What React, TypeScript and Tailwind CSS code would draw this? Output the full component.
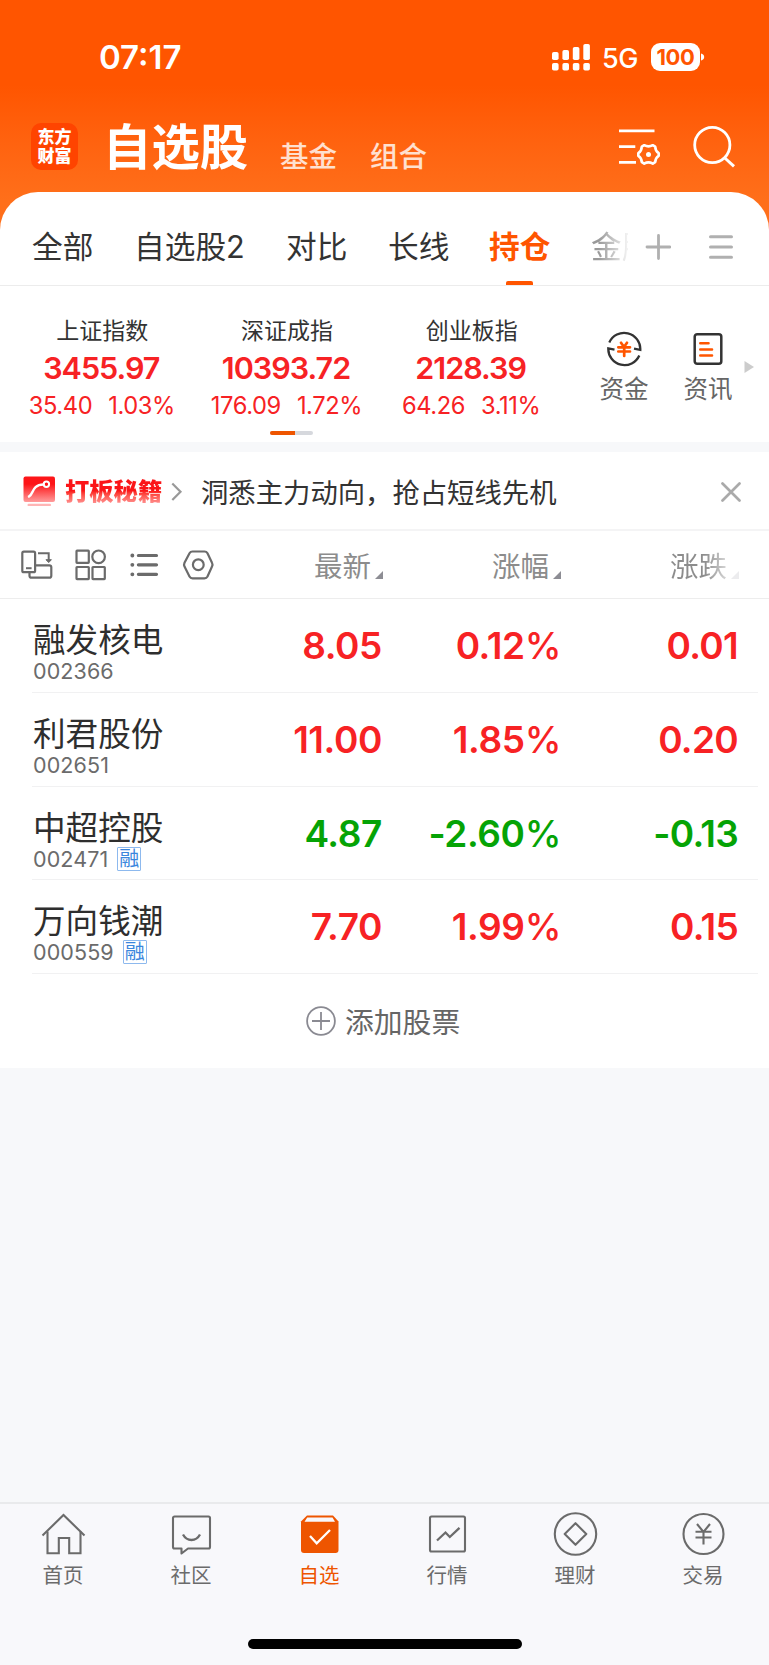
import React from "react";

const indices = [
  { name: "上证指数", value: "3455.97", change: "35.40", pct: "1.03%" },
  { name: "深证成指", value: "10393.72", change: "176.09", pct: "1.72%" },
  { name: "创业板指", value: "2128.39", change: "64.26", pct: "3.11%" },
];

const stocks = [
  { name: "融发核电", code: "002366", tag: false, price: "8.05", pct: "0.12", diff: "0.01", up: true },
  { name: "利君股份", code: "002651", tag: false, price: "11.00", pct: "1.85", diff: "0.20", up: true },
  { name: "中超控股", code: "002471", tag: true, price: "4.87", pct: "-2.60", diff: "-0.13", up: false },
  { name: "万向钱潮", code: "000559", tag: true, price: "7.70", pct: "1.99", diff: "0.15", up: true },
];

function StatusBar() {
  return (
    <div className="flex h-[115px] items-start justify-between pl-[99px] pr-[64px]">
      <span className="mt-[37px] text-[33px] font-semibold leading-[40px] text-white">07:17</span>
      <div className="mt-[43px] flex h-[28px] items-center">
        <svg width="39" height="28" viewBox="0 0 39 28" fill="#fff">
          <rect x="0" y="9" width="6.6" height="8" rx="1.8" />
          <rect x="10.4" y="7" width="6.6" height="10" rx="1.8" />
          <rect x="20.8" y="4" width="6.6" height="13" rx="1.8" />
          <rect x="31.3" y="1" width="6.6" height="16" rx="1.8" />
          <rect x="0" y="20" width="6.6" height="7.5" rx="1.8" />
          <rect x="10.4" y="20" width="6.6" height="7.5" rx="1.8" />
          <rect x="20.8" y="20" width="6.6" height="7.5" rx="1.8" />
          <rect x="31.3" y="20" width="6.6" height="7.5" rx="1.8" />
        </svg>
        <span className="ml-[11px] mt-[3px] w-[38px] text-[27px] font-medium leading-[28px] tracking-[-0.5px] text-white">5G</span>
        <div className="ml-[11px] flex h-[28px] w-[49px] items-center justify-center rounded-[9px] bg-white text-[22px] font-bold leading-[28px] tracking-[-0.4px] text-[#ff5500]">
          100
        </div>
        <svg className="ml-[1px]" width="4" height="8" viewBox="0 0 4 8" fill="#fff">
          <path d="M0 0.5C2 1 3.2 2.3 3.2 4S2 7 0 7.5Z" />
        </svg>
      </div>
    </div>
  );
}

function TitleBar() {
  return (
    <div className="flex h-[77px] pl-[31px]">
      <div className="mt-[8px] flex h-[47px] w-[47px] flex-col items-center justify-center rounded-[10px] bg-[#ff4400] text-[17px] font-black leading-[19px] text-white">
        <span>东方</span>
        <span>财富</span>
      </div>
      <span className="ml-[25px] mt-[2px] w-[146px] whitespace-nowrap text-[48.4px] font-bold leading-[62px] text-white">自选股</span>
      <span className="ml-[31px] mt-[22px] w-[58px] whitespace-nowrap text-[28.5px] font-medium leading-[40px] text-white/80">基金</span>
      <span className="ml-[32px] mt-[22px] w-[58px] whitespace-nowrap text-[28.5px] font-medium leading-[40px] text-white/80">组合</span>
      <svg className="ml-[190px] mt-[11px]" width="44" height="44" viewBox="0 0 44 44" fill="none" stroke="#fff" strokeWidth="2.8">
        <path d="M1 4.9H36.500M1 20.600H17.300M1 36.300H18" />
        <path
          strokeWidth="2.6"
          strokeLinejoin="round"
          d="M26.200 19.200Q30.500 21.600 34.800 19.200L37.200 20.600Q37.400 25.200 40.700 27.200V29.800Q37.400 31.600 37.200 36.200L34.800 37.600Q30.500 35.200 26.200 37.600L23.800 36.200Q23.600 31.600 20.300 29.800V27.200Q23.600 25.200 23.800 20.600Z"
        />
        <circle cx="30.500" cy="28.400" r="2.5" fill="#fff" stroke="none" />
      </svg>
      <svg className="ml-[31px] mt-[9px]" width="44" height="46" viewBox="0 0 44 46" fill="none" stroke="#fff" strokeWidth="2.800">
        <circle cx="19.300" cy="21" r="17.600" />
        <path d="M31.300 33.500L41 42.300" strokeWidth="3" />
      </svg>
    </div>
  );
}

function GroupTabs() {
  return (
    <div className="flex h-[94px] items-stretch border-b border-[#ececec] pl-[32px] text-[30.7px] leading-[44px] text-[#333]">
      <span className="mt-[33px] w-[102px] whitespace-nowrap">全部</span>
      <span className="mt-[33px] w-[152px] whitespace-nowrap">自选股2</span>
      <span className="mt-[33px] w-[102px] whitespace-nowrap">对比</span>
      <span className="mt-[33px] w-[101px] whitespace-nowrap">长线</span>
      <div className="flex w-[102px] flex-col justify-between">
        <span className="mt-[33px] whitespace-nowrap font-bold text-[#ff5500]">持仓</span>
        <div className="ml-[17px] h-[4px] w-[27px] rounded-t-[2px] bg-[#ff5500]" />
      </div>
      <span className="mt-[33px] h-[44px] w-[37px] overflow-hidden whitespace-nowrap bg-gradient-to-r from-[#999] from-20% to-[#f4f4f4] bg-clip-text text-transparent">
        金股
      </span>
      <svg className="ml-[17px] mt-[42px]" width="26" height="26" viewBox="0 0 26 26" stroke="#b0b0b0" strokeWidth="2.800" strokeLinecap="round">
        <path d="M2 13H25M13.500 1.500V24.500" />
      </svg>
      <svg className="ml-[37px] mt-[42px]" width="26" height="26" viewBox="0 0 26 26" stroke="#b0b0b0" strokeWidth="3" strokeLinecap="round">
        <path d="M2.500 2.800H23.500M2.500 13H23.500M2.500 23.200H23.500" />
      </svg>
    </div>
  );
}

function IndexPanel() {
  return (
    <div className="flex h-[156px] pl-[10px]">
      <div className="w-[554px]">
        <div className="grid grid-cols-3">
          {indices.map((it) => (
            <div key={it.name} className="flex flex-col items-center">
              <span className="mt-[29px] text-[23px] leading-[32px] text-[#333]">{it.name}</span>
              <span className="mr-[2px] mt-[1px] text-[30.5px] font-semibold leading-[40px] tracking-[-1px] text-[#f72224]">{it.value}</span>
              <div className="mr-[1px] mt-[2px] flex gap-[16px] text-[23.7px] leading-[32px] tracking-[-0.4px] text-[#f72224]">
                <span>{it.change}</span>
                <span>{it.pct}</span>
              </div>
            </div>
          ))}
        </div>
        <div className="ml-[260px] mt-[9px] h-[4px] w-[43px] overflow-hidden rounded-full bg-[#d6d8dd]">
          <div className="h-full w-[25px] bg-[#ee5500]" />
        </div>
      </div>
      <div className="ml-[24px] flex w-[72px] flex-col items-center">
        <svg className="mt-[45px]" width="38" height="36" viewBox="0 0 38 36" fill="none" stroke="#333" strokeWidth="2.300">
          <path d="M4.300 11.500A16.200 16.200 0 0 1 35.300 18.900L29 17.700" />
          <path d="M34.300 24.500A16.200 16.200 0 0 1 3.300 17.400L9.500 18.600" />
          <path stroke="#ff5500" strokeWidth="2.700" strokeLinecap="round" d="M16 11.800L19 16L22 11.800M13.300 16.300H25M13.300 20.500H25M19.200 16V25" />
        </svg>
        <span className="mt-[4px] text-[24.5px] leading-[36px] text-[#666]">资金</span>
      </div>
      <div className="ml-[12px] flex w-[72px] flex-col items-center">
        <svg className="mt-[45px]" width="30" height="36" viewBox="0 0 30 36" fill="none" stroke="#333" strokeWidth="2.500">
          <rect x="1.700" y="3.200" width="26.600" height="29.600" rx="2.500" />
          <path stroke="#ff5500" strokeWidth="2.600" strokeLinecap="round" d="M7.300 12.200H15.500M7.300 18.500H19M7.300 24.500H19" />
        </svg>
        <span className="mt-[4px] text-[24.5px] leading-[36px] text-[#666]">资讯</span>
      </div>
      <svg className="mt-[74px]" width="10" height="14" viewBox="0 0 10 14" fill="#ccc">
        <path d="M0.500 1L10 7L0.500 13Z" />
      </svg>
    </div>
  );
}

function PromoBar() {
  return (
    <div className="flex h-[79px] items-start border-b-2 border-[#f4f4f5] pl-[23px]">
      <svg className="mt-[24px]" width="32" height="32" viewBox="0 0 32 32">
        <defs>
          <linearGradient id="promo" x1="0" y1="0" x2="0" y2="1">
            <stop offset="0.3" stopColor="#fd1518" />
            <stop offset="1" stopColor="#ff9c9c" />
          </linearGradient>
        </defs>
        <rect x="0.500" y="0.500" width="31.500" height="25.500" rx="2" fill="url(#promo)" />
        <path d="M6 20.500C10.500 19 8.500 8.500 20.500 8.500" fill="none" stroke="#fff" strokeWidth="2.500" strokeLinecap="round" />
        <circle cx="23.400" cy="8.300" r="2.700" fill="none" stroke="#fff" strokeWidth="2" />
        <rect x="4.500" y="27.700" width="23.500" height="2.400" rx="1.200" fill="#ffb5b5" />
      </svg>
      <span className="ml-[10px] mt-[21px] w-[98px] whitespace-nowrap bg-gradient-to-b from-[#fb1518] from-50% to-[#ff9090] to-85% bg-clip-text text-[24.3px] font-black leading-[36px] text-transparent">
        打板秘籍
      </span>
      <svg className="ml-[8px] mt-[30px]" width="12" height="20" viewBox="0 0 12 20" fill="none" stroke="#999" strokeWidth="2.200">
        <path d="M1.300 1.500L9.500 9.700L1.300 18" />
      </svg>
      <span className="ml-[18px] mt-[22px] w-[520px] whitespace-nowrap text-[27.35px] leading-[40px] text-[#333]">
        洞悉主力动向，抢占短线先机
      </span>
      <svg className="mt-[30px]" width="20" height="20" viewBox="0 0 20 20" stroke="#aaa" strokeWidth="2.700" strokeLinecap="round">
        <path d="M1.500 1.500L18.500 18.500M18.500 1.500L1.500 18.500" />
      </svg>
    </div>
  );
}

function SortMark({ faded = false }: { faded?: boolean }) {
  return (
    <svg className="mb-[2px] ml-[4px]" width="8" height="8" viewBox="0 0 8 8" fill={faded ? "#ececee" : "#8d8d94"}>
      <path d="M8 0V8H0Z" />
    </svg>
  );
}

function TableHead() {
  return (
    <div className="flex h-[68px] border-b border-[#ededed] pl-[21px] text-[28.5px] leading-[36px] text-[#8c8c8c]">
      <div className="flex w-[228px] pt-[17px]">
        <svg width="194" height="34" viewBox="0 0 194 34" fill="none" stroke="#6b6b6b" strokeWidth="2.200">
          <rect x="1.300" y="3.700" width="12.800" height="20.500" rx="1.500" />
          <path d="M5 20.200H10.600" strokeWidth="2" />
          <path d="M17 5.200H27.700V12" strokeWidth="2" />
          <path d="M25 11.700H30.400L27.700 14.600Z" fill="#6b6b6b" strokeWidth="1" />
          <path d="M15 17.300H28.300A2 2 0 0 1 30.300 19.300V27.700A2 2 0 0 1 28.300 29.700H10.500A2 2 0 0 1 8.500 27.700V25" />
          <rect x="55.500" y="2.700" width="12.300" height="12.100" rx="0.500" />
          <circle cx="77.600" cy="8.800" r="6.300" />
          <rect x="55.500" y="19" width="12.300" height="12.100" rx="0.500" />
          <rect x="71.500" y="19" width="12.300" height="12.100" rx="0.500" />
          <path d="M117.400 7.500H135.500M117.400 16.800H135.500M117.400 26.300H135.500" strokeWidth="3.200" strokeLinecap="round" />
          <path d="M111.300 7.500H111.400M111.300 16.800H111.400M111.300 26.300H111.400" strokeWidth="3.800" strokeLinecap="round" />
          <path d="M171.500 3.500H183.500Q185.500 3.500 186.500 5.200L191 14.800Q192 16.700 191 18.600L186.500 28.400Q185.500 30.300 183.500 30.300H171.500Q169.500 30.300 168.500 28.400L163.500 18.600Q162.600 16.700 163.500 14.800L168.500 5.200Q169.500 3.500 171.500 3.500Z" />
          <circle cx="177.300" cy="16.700" r="5.400" />
        </svg>
      </div>
      <div className="flex h-[50px] w-[134px] items-end justify-end">
        <span className="mb-[-4px] whitespace-nowrap">最新</span>
        <SortMark />
      </div>
      <div className="flex h-[50px] w-[178px] items-end justify-end">
        <span className="mb-[-4px] whitespace-nowrap">涨幅</span>
        <SortMark />
      </div>
      <div className="flex h-[50px] w-[178px] items-end justify-end">
        <span className="mb-[-4px] whitespace-nowrap bg-gradient-to-r from-[#8c8c8c] from-60% to-[#d8d8d8] bg-clip-text text-transparent">涨跌</span>
        <SortMark faded />
      </div>
    </div>
  );
}

function StockRow({ s }: { s: (typeof stocks)[number] }) {
  const tone = s.up ? "text-[#f72224]" : "text-[#05a305]";
  return (
    <div className="ml-[32px] mr-[11px] flex h-[93.8px] border-b border-[#f1f1f2]">
      <div className="w-[217px] pl-[1px]">
        <div className="mt-[20px] whitespace-nowrap text-[32.6px] leading-[42px] text-[#2e2e2e]">{s.name}</div>
        <div className="mt-[-2px] flex h-[24px] items-center text-[21.5px] leading-[24px] tracking-[0.1px] text-[#6b6b6b]">
          <span>{s.code}</span>
          {s.tag && (
            <span className="ml-[9px] flex h-[24px] w-[24px] items-center justify-center rounded-[1px] border border-[#8db9ee] text-[20px] leading-[22px] tracking-normal text-[#3a86dd]">
              融
            </span>
          )}
        </div>
      </div>
      <div className={"flex pt-[24px] text-[37px] font-semibold leading-[46px] tracking-[-0.4px] " + tone}>
        <span className="w-[133px] text-right">{s.price}</span>
        <span className="w-[179px] text-right">
          {s.pct}
          <span className="font-medium">%</span>
        </span>
        <span className="w-[177px] text-right tracking-[-0.7px]">{s.diff}</span>
      </div>
    </div>
  );
}

const navIcons: Record<string, React.ReactNode> = {
  首页: (
    <g stroke="#6b6b6b" strokeWidth="2.100">
      <path d="M1.500 23.500L22.500 3L43.500 23.500" />
      <path d="M6.500 19.500V41.300H17.800V26H28.200V41.300H39.500V19.500" />
    </g>
  ),
  社区: (
    <g stroke="#6b6b6b" strokeWidth="2.100" strokeLinejoin="round">
      <path d="M5.500 4.500H39.500A1.500 1.500 0 0 1 41 6V35A1.500 1.500 0 0 1 39.500 36.500H19L12.500 41.500V36.500H5.500A1.500 1.500 0 0 1 4 35V6A1.500 1.500 0 0 1 5.500 4.500Z" />
      <path d="M14 22.500Q17 28 22.500 28T31 22.500" strokeWidth="2.300" />
    </g>
  ),
  自选: (
    <g>
      <path d="M10 3.500H36L41.500 9.500V38A3 3 0 0 1 38.500 41H7A3 3 0 0 1 4 38V9.500Z" fill="#ee5500" />
      <path d="M10.200 5.500H35.500L38 9.800H7.500Z" fill="#f8f8fb" />
      <path d="M13 24L19.700 31.300L33 18" stroke="#fff" strokeWidth="2.300" />
    </g>
  ),
  行情: (
    <g stroke="#6b6b6b" strokeWidth="2.100">
      <rect x="5" y="4.500" width="35" height="35" rx="1.500" />
      <path d="M12 28.500L20.500 20.500L24.800 25L34.500 15.800" strokeWidth="2.300" />
    </g>
  ),
  理财: (
    <g stroke="#6b6b6b" strokeWidth="2.100" strokeLinejoin="round">
      <circle cx="22.500" cy="22" r="20.700" />
      <path d="M22.500 11.200L33.300 22L22.500 32.800L11.700 22Z" />
    </g>
  ),
  交易: (
    <g stroke="#6b6b6b" strokeWidth="2.100">
      <circle cx="22.500" cy="22" r="20" />
      <path d="M16 12L22.500 19.800L29 12M14.500 19.800H30.500M14.500 25.500H30.500M22.500 19.800V32.500" />
    </g>
  ),
};

function BottomNav() {
  return (
    <div className="flex h-[163px] flex-col items-center border-t-2 border-[#e9eaec] bg-[#f8f8fb]">
      <div className="grid h-[135px] w-[768px] grid-cols-6 self-start">
        {Object.keys(navIcons).map((label) => (
          <div key={label} className="flex flex-col items-center">
            <svg className="mr-[1px] mt-[8px]" width="45" height="46" viewBox="0 0 45 46" fill="none">
              {navIcons[label]}
            </svg>
            <span className={"mr-[2px] mt-[3px] text-[20.5px] leading-[30px] " + (label === "自选" ? "text-[#ee5500]" : "text-[#6b6b6b]")}>{label}</span>
          </div>
        ))}
      </div>
      <div className="h-[10px] w-[274px] rounded-full bg-black" />
    </div>
  );
}

export default function App() {
  return (
    <div className="flex h-[1665px] w-[769px] flex-col overflow-hidden bg-[#f7f8fa] font-['Inter','Noto_Sans_CJK_SC',sans-serif]">
      <div className="bg-gradient-to-b from-[#ff5500] from-30% to-[#ff6f1a] to-70%">
        <StatusBar />
        <TitleBar />
        <div className="rounded-t-[38px] bg-white">
          <GroupTabs />
        </div>
      </div>
      <div className="bg-white">
        <IndexPanel />
      </div>
      <div className="mt-[10px] h-[615.5px] bg-white">
        <PromoBar />
        <TableHead />
        {stocks.map((s) => (
          <StockRow key={s.code} s={s} />
        ))}
        <div className="flex h-[92px] items-center pl-[306px]">
          <svg className="mt-px" width="30" height="30" viewBox="0 0 30 30" fill="none" stroke="#8a8a92" strokeWidth="1.800">
            <circle cx="15" cy="15" r="13.900" />
            <path d="M6 15H24M15 6V24" />
          </svg>
          <span className="ml-[9px] mt-[5px] text-[28.8px] leading-[40px] text-[#666]">添加股票</span>
        </div>
      </div>
      <div className="flex-1" />
      <BottomNav />
    </div>
  );
}
